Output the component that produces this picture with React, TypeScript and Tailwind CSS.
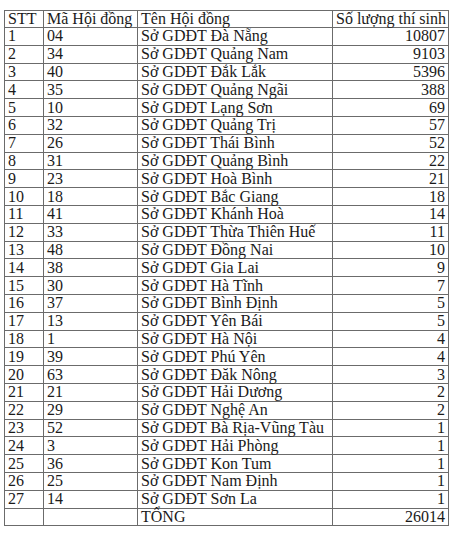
const rows: [string, string, string, string][] = [
  ["1", "04", "Đà Nẵng", "10807"],
  ["2", "34", "Quảng Nam", "9103"],
  ["3", "40", "Đắk Lắk", "5396"],
  ["4", "35", "Quảng Ngãi", "388"],
  ["5", "10", "Lạng Sơn", "69"],
  ["6", "32", "Quảng Trị", "57"],
  ["7", "26", "Thái Bình", "52"],
  ["8", "31", "Quảng Bình", "22"],
  ["9", "23", "Hoà Bình", "21"],
  ["10", "18", "Bắc Giang", "18"],
  ["11", "41", "Khánh Hoà", "14"],
  ["12", "33", "Thừa Thiên Huế", "11"],
  ["13", "48", "Đồng Nai", "10"],
  ["14", "38", "Gia Lai", "9"],
  ["15", "30", "Hà Tĩnh", "7"],
  ["16", "37", "Bình Định", "5"],
  ["17", "13", "Yên Bái", "5"],
  ["18", "1", "Hà Nội", "4"],
  ["19", "39", "Phú Yên", "4"],
  ["20", "63", "Đăk Nông", "3"],
  ["21", "21", "Hải Dương", "2"],
  ["22", "29", "Nghệ An", "2"],
  ["23", "52", "Bà Rịa-Vũng Tàu", "1"],
  ["24", "3", "Hải Phòng", "1"],
  ["25", "36", "Kon Tum", "1"],
  ["26", "25", "Nam Định", "1"],
  ["27", "14", "Sơn La", "1"],
];

const cell = "border border-[#6b6b6b] px-[3px] py-0 align-middle whitespace-nowrap";

export default function App() {
  return (
    <div className="w-[455px] h-[533px] overflow-hidden bg-white pt-[10px] pl-[4px] text-[#1a1a1a] font-[family-name:'Liberation_Serif',serif] text-[16px] leading-none">
      <table className="border-collapse table-fixed w-[444px]">
        <colgroup>
          <col className="w-[39px]" />
          <col className="w-[94px]" />
          <col className="w-[195px]" />
          <col className="w-[116px]" />
        </colgroup>
        <thead>
          <tr className="h-[17px]">
            <th className={`${cell} text-left font-normal`}>STT</th>
            <th className={`${cell} text-left font-normal`}>Mã Hội đồng</th>
            <th className={`${cell} text-left font-normal`}>Tên Hội đồng</th>
            <th className={`${cell} text-left font-normal`}>Số lượng thí sinh</th>
          </tr>
        </thead>
        <tbody>
          {rows.map(([stt, ma, ten, sl]) => (
            <tr key={stt} className="h-[17.8px]">
              <td className={cell}>{stt}</td>
              <td className={cell}>{ma}</td>
              <td className={cell}>Sở GDĐT {ten}</td>
              <td className={`${cell} text-right`}>{sl}</td>
            </tr>
          ))}
          <tr className="h-[17.8px]">
            <td className={cell}></td>
            <td className={cell}></td>
            <td className={cell}>TỔNG</td>
            <td className={`${cell} text-right`}>26014</td>
          </tr>
        </tbody>
      </table>
    </div>
  );
}
